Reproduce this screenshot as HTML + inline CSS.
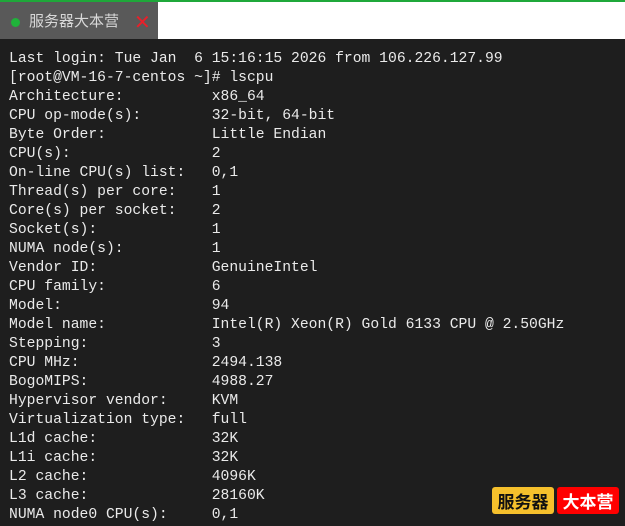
<!DOCTYPE html>
<html><head><meta charset="utf-8"><style>
html,body{margin:0;padding:0;width:625px;height:526px;overflow:hidden;background:#1e1e1e}
.top{position:absolute;left:0;top:0;width:625px;height:2px;background:#1fa83a}
.bar{position:absolute;left:0;top:2px;width:625px;height:37px;background:#fff}
.tab{position:absolute;left:0;top:2px;width:158px;height:37px;background:#595959}
.dot{position:absolute;left:11px;top:16px;width:9px;height:9px;border-radius:50%;background:#1fb33a}
.tt{position:absolute;left:29px;top:8px;font:15px "Noto Sans CJK SC",sans-serif;color:#d8d8d8}
.x{position:absolute;left:134px;top:8px;font:20px "Liberation Sans",sans-serif;color:#e8202a}
pre{position:absolute;left:9px;top:50px;margin:0;font:14.7px/19px "Liberation Mono",monospace;color:#eaeaea}
.lg{position:absolute;top:487px;height:27px;border-radius:3px;font:bold 17px/27px "Noto Sans CJK SC",sans-serif;text-align:center}
</style></head><body>
<div class="top"></div><div class="bar"></div>
<div class="tab"><div class="dot"></div><div class="tt">服务器大本营</div><div class="x">✕</div></div>
<pre>Last login: Tue Jan  6 15:16:15 2026 from 106.226.127.99
[root@VM-16-7-centos ~]# lscpu
Architecture:          x86_64
CPU op-mode(s):        32-bit, 64-bit
Byte Order:            Little Endian
CPU(s):                2
On-line CPU(s) list:   0,1
Thread(s) per core:    1
Core(s) per socket:    2
Socket(s):             1
NUMA node(s):          1
Vendor ID:             GenuineIntel
CPU family:            6
Model:                 94
Model name:            Intel(R) Xeon(R) Gold 6133 CPU @ 2.50GHz
Stepping:              3
CPU MHz:               2494.138
BogoMIPS:              4988.27
Hypervisor vendor:     KVM
Virtualization type:   full
L1d cache:             32K
L1i cache:             32K
L2 cache:              4096K
L3 cache:              28160K
NUMA node0 CPU(s):     0,1</pre>
<div class="lg" style="left:492px;width:62px;background:#f5c02c;color:#111">服务器</div>
<div class="lg" style="left:557px;width:62px;background:#f00;color:#fff">大本营</div>
</body></html>
